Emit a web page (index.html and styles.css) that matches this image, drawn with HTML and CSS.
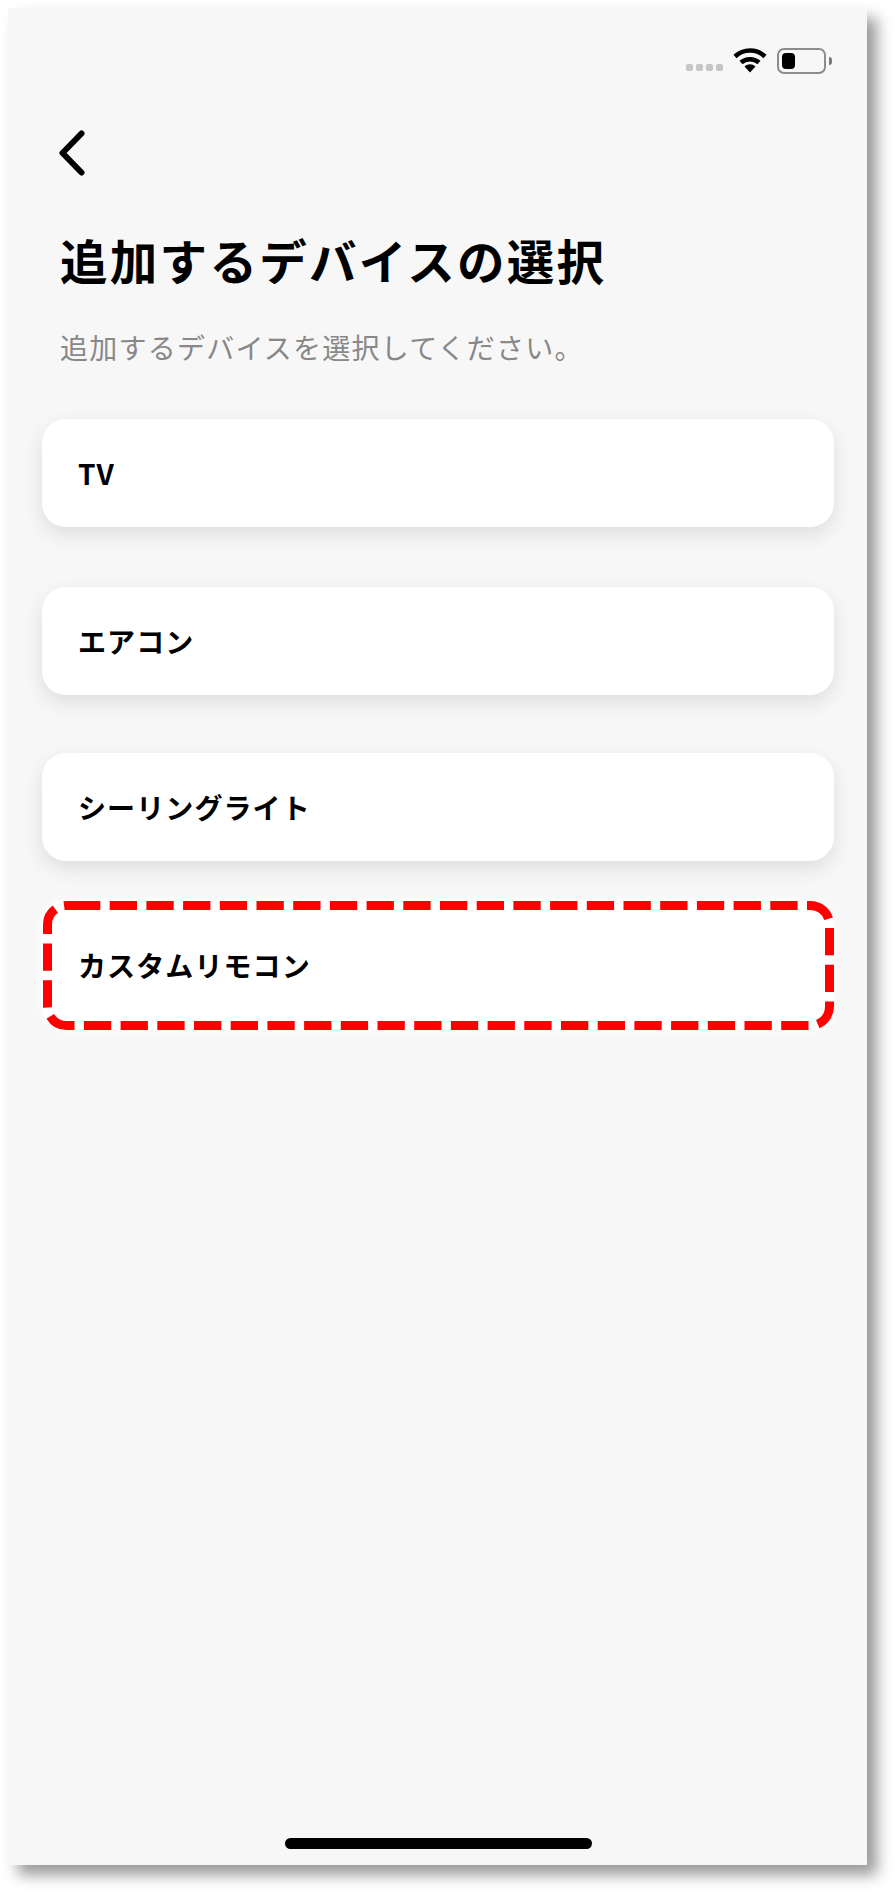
FILE: index.html
```html
<!DOCTYPE html>
<html lang="ja">
<head>
    <meta charset="UTF-8">
    <meta name="viewport" content="width=device-width, initial-scale=1.0">
    <title>追加するデバイスの選択</title>
    <link rel="stylesheet" href="styles.css">
</head>
<body>
    <div class="screen">
        <div class="status">
            <div class="signal"><span></span><span></span><span></span><span></span></div>
            <svg class="wifi" width="34" height="26" viewBox="0 0 34 26">
                <path d="M2 9.5C10.500 1.500 23.500 1.500 32 9.500" fill="none" stroke="#000" stroke-width="4.500"/>
                <path d="M8 15.500C13 11 21 11 26 15.500" fill="none" stroke="#000" stroke-width="4.500"/>
                <path d="M11.500 19.500C15 16.500 19 16.500 22.500 19.500L17 25.500Z" fill="#000"/>
            </svg>
            <div class="battery"><div class="battery-fill"></div></div>
            <div class="battery-tip"></div>
        </div>

        <svg class="back" width="26" height="46" viewBox="0 0 26 46">
            <path d="M22.500 3.500L3.500 23L22.500 42.500" fill="none" stroke="#000" stroke-width="6" stroke-linecap="round" stroke-linejoin="round"/>
        </svg>

        <h1 class="title">追加するデバイスの選択</h1>
        <p class="lead">追加するデバイスを選択してください。</p>

        <div class="list">
            <div class="item">TV</div>
            <div class="item item-tight">エアコン</div>
            <div class="item item-above-marked">シーリングライト</div>
            <div class="item item-marked">
                カスタムリモコン
                <svg class="dashes" width="793" height="131" viewBox="0 0 793 131">
                    <path d="M31 5.500H768.500A19 19 0 0 1 787.500 24.500V106.500A19 19 0 0 1 768.500 125.500H24.500A19 19 0 0 1 5.500 106.500V24.500A19 19 0 0 1 24.500 5.500H31" fill="none" stroke="#f00" stroke-width="9" stroke-dasharray="27.300 9.400"/>
                </svg>
            </div>
        </div>

        <div class="home-bar"></div>
    </div>
</body>
</html>
```

FILE: styles.css
```css
html, body {
    margin: 0;
    padding: 0;
}
body {
    background-color: #fff;
    width: 896px;
    height: 1894px;
    overflow: hidden;
    font-family: "Noto Sans CJK JP", "Noto Sans", sans-serif;
}
.screen {
    position: relative;
    box-sizing: border-box;
    width: 859px;
    height: 1857px;
    margin: 8px 0 0 8px;
    padding: 0 33px 0 34px;
    background-color: #f7f7f7;
    box-shadow: 10px 10px 14px rgba(0, 0, 0, 0.4);
    display: flex;
    flex-direction: column;
}
.status {
    height: 72px;
    padding-top: 39px;
    margin-right: 2px;
    box-sizing: content-box;
    display: flex;
    justify-content: flex-end;
    align-items: flex-start;
}
.signal {
    display: flex;
    gap: 3px;
    margin: 17px 10px 0 0;
}
.signal span {
    width: 7px;
    height: 7px;
    border-radius: 2px;
    background: #c6c6c6;
}
.battery {
    box-sizing: border-box;
    width: 49px;
    height: 26px;
    margin: 1px 0 0 10px;
    padding: 3px;
    border: 2px solid #8c8c8c;
    border-radius: 7px;
}
.battery-fill {
    width: 13px;
    height: 100%;
    background: #000;
    border-radius: 4px;
}
.battery-tip {
    width: 3px;
    height: 8px;
    margin: 10px 0 0 3px;
    background: #777;
    border-radius: 0 3px 3px 0;
}
.back {
    display: block;
    margin: 11px 0 0 17px;
}
.title {
    margin: 51px 0 0 18px;
    font-size: 47.500px;
    font-weight: 700;
    line-height: 66px;
    letter-spacing: 2.300px;
    color: #000;
}
.lead {
    margin: 34px 0 0 18px;
    font-size: 28px;
    font-weight: 400;
    line-height: 40px;
    letter-spacing: 1.240px;
    color: #888;
}
.list {
    margin-top: 52px;
    display: flex;
    flex-direction: column;
}
.item {
    box-sizing: border-box;
    height: 108px;
    margin-bottom: 60px;
    padding-left: 36px;
    display: flex;
    align-items: center;
    background: #fff;
    border-radius: 24px;
    box-shadow: 0 8px 20px rgba(0, 0, 0, 0.1);
    font-size: 28px;
    font-weight: 700;
    letter-spacing: 1.100px;
    color: #000;
}
.item-tight {
    margin-bottom: 58px;
}
.item-above-marked {
    margin-bottom: 39px;
}
.item-marked {
    position: relative;
    height: 130px;
    margin: 0;
    box-shadow: 0 0 12px rgba(255, 255, 255, 0.9);
}
.dashes {
    position: absolute;
    left: 0;
    top: 0;
}
.home-bar {
    position: absolute;
    left: 277px;
    top: 1830px;
    width: 307px;
    height: 11px;
    border-radius: 6px;
    background: #000;
}
```
